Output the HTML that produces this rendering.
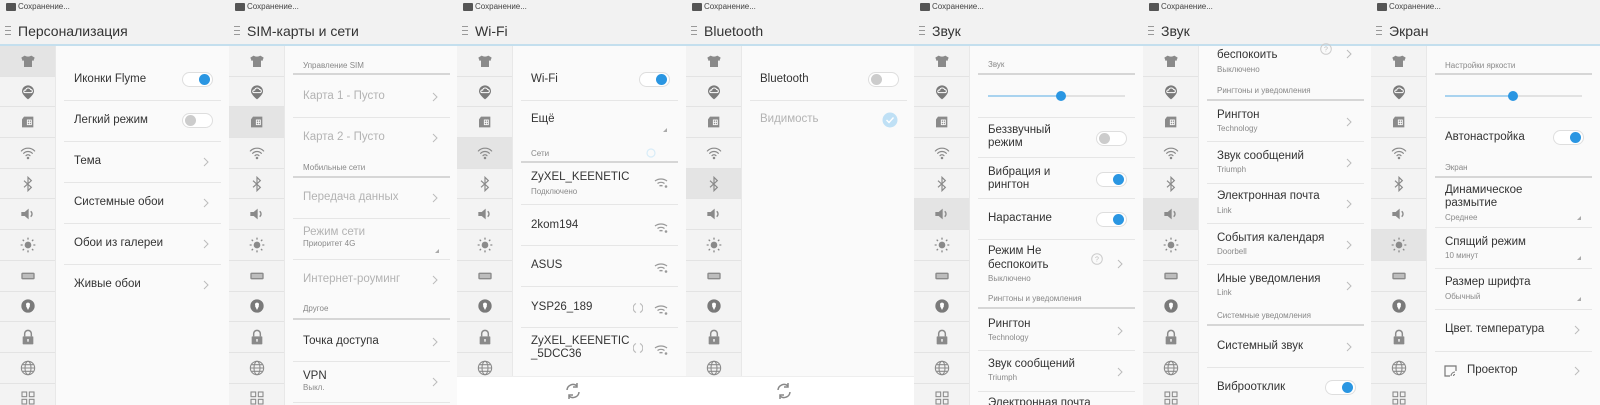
<!DOCTYPE html>
<html><head><meta charset="utf-8">
<style>
*{margin:0;padding:0;box-sizing:border-box}
body{width:1600px;height:405px;overflow:hidden;background:#fafafa;font-family:"Liberation Sans","Noto Sans CJK SC",sans-serif;position:relative}
.p{position:absolute;top:0;width:229px;height:405px;overflow:hidden;background:#fafafa}
.st{position:absolute;left:0;top:0;width:100%;height:16px;background:#f2f2f2}
.st .tx{position:absolute;left:18px;top:2px;font-size:8px;color:#444;line-height:10px}
.st .im{position:absolute;left:6px;top:3px;width:10px;height:8px;background:#555;border-radius:1px}
.tb{position:absolute;left:0;top:16px;width:100%;height:29px;background:#f2f2f2}
.tb .hm{position:absolute;left:5px;top:10px;width:6px;height:9px;border-top:1px solid #999;border-bottom:1px solid #999}
.tb .hm:after{content:"";position:absolute;left:0;top:3px;width:6px;height:1px;background:#999}
.tb .tt{position:absolute;left:18px;top:7px;font-size:14px;color:#333;line-height:16px;white-space:nowrap}
.bl{position:absolute;left:0;top:44px;width:100%;height:2px;background:#c4dfee}
.sd{position:absolute;left:0;top:46px;width:56px;height:360px;background:#f3f3f3;border-right:1px solid #e8e8e8}
.r{height:30.7px;border-bottom:1px solid #e3e3e3;display:flex;align-items:center;justify-content:center}
.r.sel{background:#e4e4e4}
.r svg{width:16px;height:16px}
.t{position:absolute;left:74px;font-size:11.5px;color:#333;white-space:nowrap;line-height:13px}
.g{color:#b3b3b3}
.s{position:absolute;left:74px;font-size:8px;color:#8a8a8a;white-space:nowrap;line-height:10px}
.h{position:absolute;left:74px;font-size:8px;color:#888;white-space:nowrap;line-height:10px}
.ln{position:absolute;left:64px;width:157px;height:1px;background:#e6e6e6}
.hl{position:absolute;left:64px;width:157px;height:2px;background:#d6d6d6}
.tg{position:absolute;left:182px;width:31px;height:15px;border:1px solid #dedede;border-radius:8px;background:#fff}
.tg:after{content:"";position:absolute;top:1px;width:11px;height:11px;border-radius:50%;background:#ccc;left:2px}
.tg.on:after{background:#2a96e2;left:16px}
.ch{position:absolute;left:203px;width:6px;height:10px}
.tri{position:absolute;left:206px;width:0;height:0;border-left:4px solid transparent;border-bottom:4px solid #aaa}
.sl{position:absolute;left:74px;width:137px;height:2px;background:#e2e2e2}
.sl i{position:absolute;left:0;top:0;height:2px;background:#a9d3ef}
.sl b{position:absolute;top:-4px;width:10px;height:10px;border-radius:50%;background:#2a96e2}
.bb{position:absolute;left:0;top:376px;width:100%;height:29px;background:#fff;border-top:1px solid #eee}
.ic{position:absolute}
</style></head><body>
<svg width="0" height="0" style="position:absolute">
<defs>
<g id="i0"><path d="M7 4 L2 7 L4 12 L6 11 V21 H18 V11 L20 12 L22 7 L17 4 Q12 7 7 4Z" fill="#8a8a8a"/></g>
<g id="i1"><path d="M12 2a9 9 0 0 1 9 9c0 5-9 12-9 12s-9-7-9-12a9 9 0 0 1 9-9z" fill="#7a7a7a"/><path d="M7 13h10a2.5 2.5 0 0 0-1-4.8 4 4 0 0 0-7.5 1A2 2 0 0 0 7 13z" fill="none" stroke="#fff" stroke-width="1.5"/></g>
<g id="i2"><path d="M6 4h14v16H3V8z" fill="#8a8a8a"/><rect x="11" y="9" width="6" height="7" fill="none" stroke="#fff" stroke-width="1.3"/><path d="M14 9v7M11 12.5h6" stroke="#fff" stroke-width="1.2"/></g>
<g id="i3" fill="none" stroke="#8a8a8a" stroke-width="1.8" stroke-linecap="round"><path d="M2 9a14 14 0 0 1 20 0"/><path d="M5.5 12.5a9 9 0 0 1 13 0"/><path d="M9 16a4 4 0 0 1 6 0"/><circle cx="12" cy="19.5" r="1" fill="#8a8a8a"/></g>
<g id="i4"><path d="M6 7l11 10-5 5V2l5 5L6 17" fill="none" stroke="#8a8a8a" stroke-width="1.8"/></g>
<g id="i5"><path d="M2 9h5l6-5v16l-6-5H2z" fill="#8a8a8a"/><path d="M16 8a5 5 0 0 1 0 8" fill="none" stroke="#8a8a8a" stroke-width="2"/></g>
<g id="i6"><circle cx="12" cy="12" r="5" fill="#8a8a8a"/><g stroke="#8a8a8a" stroke-width="2"><path d="M12 1v3M12 20v3M1 12h3M20 12h3M4 4l2 2M18 18l2 2M4 20l2-2M18 6l2-2"/></g></g>
<g id="i7"><rect x="2" y="7" width="20" height="10" rx="2" fill="#8a8a8a"/><rect x="4" y="9" width="16" height="6" fill="#bdbdbd"/></g>
<g id="i8"><circle cx="12" cy="12" r="10" fill="#7a7a7a"/><circle cx="12" cy="10" r="3" fill="#fff"/><path d="M9 12l3 6 3-6z" fill="#fff"/></g>
<g id="i9"><path d="M7 11V7a5 5 0 0 1 10 0v4" fill="none" stroke="#8a8a8a" stroke-width="2.2"/><rect x="4" y="11" width="16" height="12" rx="1" fill="#8a8a8a"/><rect x="11" y="15" width="2" height="4" fill="#fff"/></g>
<g id="i10" fill="none" stroke="#8a8a8a" stroke-width="1.6"><circle cx="12" cy="12" r="10"/><ellipse cx="12" cy="12" rx="4.5" ry="10"/><path d="M2 12h20M4 7h16M4 17h16"/></g>
<g id="i11" fill="none" stroke="#8a8a8a" stroke-width="1.6"><rect x="3" y="3" width="7" height="7"/><rect x="14" y="3" width="7" height="7"/><rect x="3" y="14" width="7" height="7"/><rect x="14" y="14" width="7" height="7"/></g>
<g id="chev"><path d="M1 1l4 4-4 4" fill="none" stroke="#bbb" stroke-width="1"/></g>
<g id="wf"><path d="M1 6a10 10 0 0 1 12 0M3.5 8.5a6 6 0 0 1 7 0M5.5 11a3 3 0 0 1 3 0" fill="none" stroke="#999" stroke-width="1.3"/><circle cx="12" cy="11.5" r="1.3" fill="#999"/></g>
<g id="sy"><path d="M3 1.5a5 5 0 0 0 0 9M7 1.5a5 5 0 0 1 0 9" fill="none" stroke="#bbb" stroke-width="1.2"/></g>
<g id="rf"><path d="M3 8a6 6 0 0 1 10-4M15 10a6 6 0 0 1-10 4" fill="none" stroke="#888" stroke-width="1.5"/><path d="M13 1v4h-4M5 17v-4h4" fill="none" stroke="#888" stroke-width="1.5"/></g>
</defs></svg>

<!-- Panel 1 -->
<div class="p" style="left:0">
<div class="st"><div class="im"></div><div class="tx">Сохранение...</div></div>
<div class="tb"><div class="hm"></div><div class="tt">Персонализация</div></div><div class="bl"></div>
<div class="sd" data-s="0"></div>
<div class="t" style="top:73px">Иконки Flyme</div><div class="tg on" style="top:72px"></div><div class="ln" style="top:100px"></div>
<div class="t" style="top:114px">Легкий режим</div><div class="tg" style="top:113px"></div><div class="ln" style="top:141px"></div>
<div class="t" style="top:155px">Тема</div><svg class="ch" style="top:157px"><use href="#chev"/></svg><div class="ln" style="top:182px"></div>
<div class="t" style="top:196px">Системные обои</div><svg class="ch" style="top:198px"><use href="#chev"/></svg><div class="ln" style="top:223px"></div>
<div class="t" style="top:237px">Обои из галереи</div><svg class="ch" style="top:239px"><use href="#chev"/></svg><div class="ln" style="top:264px"></div>
<div class="t" style="top:278px">Живые обои</div><svg class="ch" style="top:280px"><use href="#chev"/></svg>
</div>

<!-- Panel 2 -->
<div class="p" style="left:229px">
<div class="st"><div class="im"></div><div class="tx">Сохранение...</div></div>
<div class="tb"><div class="hm"></div><div class="tt">SIM-карты и сети</div></div><div class="bl"></div>
<div class="sd" data-s="2"></div>
<div class="h" style="top:61px">Управление SIM</div><div class="hl" style="top:73px"></div>
<div class="t g" style="top:90px">Карта 1 - Пусто</div><svg class="ch" style="top:92px"><use href="#chev"/></svg><div class="ln" style="top:117px"></div>
<div class="t g" style="top:131px">Карта 2 - Пусто</div><svg class="ch" style="top:133px"><use href="#chev"/></svg>
<div class="h" style="top:163px">Мобильные сети</div><div class="hl" style="top:176px"></div>
<div class="t g" style="top:191px">Передача данных</div><svg class="ch" style="top:193px"><use href="#chev"/></svg><div class="ln" style="top:218px"></div>
<div class="t g" style="top:226px">Режим сети</div><div class="s" style="top:239px">Приоритет 4G</div><div class="tri" style="top:249px"></div><div class="ln" style="top:259px"></div>
<div class="t g" style="top:273px">Интернет-роуминг</div><svg class="ch" style="top:275px"><use href="#chev"/></svg>
<div class="h" style="top:304px">Другое</div><div class="hl" style="top:318px"></div>
<div class="t" style="top:335px">Точка доступа</div><svg class="ch" style="top:337px"><use href="#chev"/></svg><div class="ln" style="top:361px"></div>
<div class="t" style="top:370px">VPN</div><div class="s" style="top:383px">Выкл.</div><svg class="ch" style="top:377px"><use href="#chev"/></svg><div class="ln" style="top:402px"></div>
</div>

<!-- Panel 3 -->
<div class="p" style="left:457px">
<div class="st"><div class="im"></div><div class="tx">Сохранение...</div></div>
<div class="tb"><div class="hm"></div><div class="tt">Wi-Fi</div></div><div class="bl"></div>
<div class="sd" data-s="3"></div>
<div class="t" style="top:73px">Wi-Fi</div><div class="tg on" style="top:72px"></div><div class="ln" style="top:100px"></div>
<div class="t" style="top:113px">Ещё</div><div class="tri" style="top:128px"></div>
<div class="h" style="top:149px">Сети</div><svg class="ic" style="left:189px;top:148px;width:10px;height:10px"><circle cx="5" cy="5" r="4" fill="none" stroke="#d8ecf8" stroke-width="1.2"/></svg><div class="hl" style="top:161px"></div>
<div class="t" style="top:171px">ZyXEL_KEENETIC</div><div class="s" style="top:187px">Подключено</div><svg class="ic" style="left:197px;top:175px;width:14px;height:13px"><use href="#wf"/></svg><div class="ln" style="top:204px"></div>
<div class="t" style="top:219px">2kom194</div><svg class="ic" style="left:197px;top:220px;width:14px;height:13px"><use href="#wf"/></svg><div class="ln" style="top:245px"></div>
<div class="t" style="top:259px">ASUS</div><svg class="ic" style="left:197px;top:260px;width:14px;height:13px"><use href="#wf"/></svg><div class="ln" style="top:286px"></div>
<div class="t" style="top:301px">YSP26_189</div><svg class="ic" style="left:176px;top:302px;width:10px;height:12px"><use href="#sy"/></svg><svg class="ic" style="left:197px;top:302px;width:14px;height:13px"><use href="#wf"/></svg><div class="ln" style="top:327px"></div>
<div class="t" style="top:335px">ZyXEL_KEENETIC</div><div class="t" style="top:348px">_5DCC36</div><svg class="ic" style="left:176px;top:342px;width:10px;height:12px"><use href="#sy"/></svg><svg class="ic" style="left:197px;top:342px;width:14px;height:13px"><use href="#wf"/></svg>
<div class="bb"><svg class="ic" style="left:107px;top:5px;width:18px;height:18px"><use href="#rf"/></svg></div>
</div>

<!-- Panel 4 -->
<div class="p" style="left:686px">
<div class="st"><div class="im"></div><div class="tx">Сохранение...</div></div>
<div class="tb"><div class="hm"></div><div class="tt">Bluetooth</div></div><div class="bl"></div>
<div class="sd" data-s="4"></div>
<div class="t" style="top:73px">Bluetooth</div><div class="tg" style="top:72px"></div><div class="ln" style="top:100px"></div>
<div class="t g" style="top:113px">Видимость</div><svg class="ic" style="left:196px;top:112px;width:16px;height:16px"><circle cx="8" cy="8" r="7.5" fill="#bfe0f5"/><path d="M4.5 8l2.5 2.5 4.5-5" fill="none" stroke="#fff" stroke-width="1.4"/></svg>
<div class="bb"><svg class="ic" style="left:89px;top:5px;width:18px;height:18px"><use href="#rf"/></svg></div>
</div>

<!-- Panel 5 -->
<div class="p" style="left:914px">
<div class="st"><div class="im"></div><div class="tx">Сохранение...</div></div>
<div class="tb"><div class="hm"></div><div class="tt">Звук</div></div><div class="bl"></div>
<div class="sd" data-s="5"></div>
<div class="h" style="top:60px">Звук</div><div class="hl" style="top:73px"></div>
<div class="sl" style="top:95px"><i style="width:73px"></i><b style="left:68px"></b></div><div class="ln" style="top:117px"></div>
<div class="t" style="top:124px">Беззвучный</div><div class="t" style="top:137px">режим</div><div class="tg" style="top:131px"></div><div class="ln" style="top:157px"></div>
<div class="t" style="top:166px">Вибрация и</div><div class="t" style="top:179px">рингтон</div><div class="tg on" style="top:172px"></div><div class="ln" style="top:198px"></div>
<div class="t" style="top:212px">Нарастание</div><div class="tg on" style="top:212px"></div><div class="ln" style="top:239px"></div>
<div class="t" style="top:245px">Режим Не</div><div class="t" style="top:259px">беспокоить</div><div class="s" style="top:274px">Выключено</div>
<svg class="ic" style="left:177px;top:253px;width:12px;height:12px"><circle cx="6" cy="6" r="5.3" fill="none" stroke="#ccc"/><text x="6" y="8.5" font-size="7" text-anchor="middle" fill="#bbb" font-family="Liberation Sans">?</text></svg>
<svg class="ch" style="top:259px"><use href="#chev"/></svg>
<div class="h" style="top:294px">Рингтоны и уведомления</div><div class="hl" style="top:307px"></div>
<div class="t" style="top:318px">Рингтон</div><div class="s" style="top:333px">Technology</div><svg class="ch" style="top:326px"><use href="#chev"/></svg><div class="ln" style="top:350px"></div>
<div class="t" style="top:358px">Звук сообщений</div><div class="s" style="top:373px">Triumph</div><svg class="ch" style="top:367px"><use href="#chev"/></svg><div class="ln" style="top:391px"></div>
<div class="t" style="top:397px">Электронная почта</div>
</div>

<!-- Panel 6 -->
<div class="p" style="left:1143px">
<div class="t" style="top:36px">Режим Не</div>
<div class="st"><div class="im"></div><div class="tx">Сохранение...</div></div>
<div class="tb"><div class="hm"></div><div class="tt">Звук</div></div><div class="bl"></div>
<div class="sd" data-s="5"></div>
<div class="t" style="top:49px">беспокоить</div><div class="s" style="top:65px">Выключено</div>
<svg class="ic" style="left:177px;top:43px;width:12px;height:12px"><circle cx="6" cy="6" r="5.3" fill="none" stroke="#ccc"/><text x="6" y="8.5" font-size="7" text-anchor="middle" fill="#bbb" font-family="Liberation Sans">?</text></svg>
<svg class="ch" style="top:49px"><use href="#chev"/></svg>
<div class="h" style="top:86px">Рингтоны и уведомления</div><div class="hl" style="top:99px"></div>
<div class="t" style="top:109px">Рингтон</div><div class="s" style="top:124px">Technology</div><svg class="ch" style="top:117px"><use href="#chev"/></svg><div class="ln" style="top:141px"></div>
<div class="t" style="top:150px">Звук сообщений</div><div class="s" style="top:165px">Triumph</div><svg class="ch" style="top:158px"><use href="#chev"/></svg><div class="ln" style="top:183px"></div>
<div class="t" style="top:190px">Электронная почта</div><div class="s" style="top:206px">Link</div><svg class="ch" style="top:199px"><use href="#chev"/></svg><div class="ln" style="top:223px"></div>
<div class="t" style="top:232px">События календаря</div><div class="s" style="top:247px">Doorbell</div><svg class="ch" style="top:240px"><use href="#chev"/></svg><div class="ln" style="top:264px"></div>
<div class="t" style="top:273px">Иные уведомления</div><div class="s" style="top:288px">Link</div><svg class="ch" style="top:281px"><use href="#chev"/></svg>
<div class="h" style="top:311px">Системные уведомления</div><div class="hl" style="top:324px"></div>
<div class="t" style="top:340px">Системный звук</div><svg class="ch" style="top:342px"><use href="#chev"/></svg><div class="ln" style="top:367px"></div>
<div class="t" style="top:381px">Виброотклик</div><div class="tg on" style="top:380px"></div>
</div>

<!-- Panel 7 -->
<div class="p" style="left:1371px">
<div class="st"><div class="im"></div><div class="tx">Сохранение...</div></div>
<div class="tb"><div class="hm"></div><div class="tt">Экран</div></div><div class="bl"></div>
<div class="sd" data-s="6"></div>
<div class="h" style="top:61px">Настройки яркости</div><div class="hl" style="top:73px"></div>
<div class="sl" style="top:95px"><i style="width:68px"></i><b style="left:63px"></b></div><div class="ln" style="top:117px"></div>
<div class="t" style="top:131px">Автонастройка</div><div class="tg on" style="top:130px"></div>
<div class="h" style="top:163px">Экран</div><div class="hl" style="top:176px"></div>
<div class="t" style="top:184px">Динамическое</div><div class="t" style="top:197px">размытие</div><div class="s" style="top:213px">Среднее</div><div class="tri" style="top:216px"></div><div class="ln" style="top:227px"></div>
<div class="t" style="top:236px">Спящий режим</div><div class="s" style="top:251px">10 минут</div><div class="tri" style="top:256px"></div><div class="ln" style="top:268px"></div>
<div class="t" style="top:276px">Размер шрифта</div><div class="s" style="top:292px">Обычный</div><div class="tri" style="top:297px"></div><div class="ln" style="top:309px"></div>
<div class="t" style="top:323px">Цвет. температура</div><svg class="ch" style="top:325px"><use href="#chev"/></svg><div class="ln" style="top:351px"></div>
<svg class="ic" style="left:73px;top:365px;width:13px;height:12px"><path d="M6 1H1v10h5M1 1h11v5" fill="none" stroke="#777" stroke-width="1.2"/><path d="M7 11a4 4 0 0 1 4-4M9.5 11a1.5 1.5 0 0 1 1.5-1.5" fill="none" stroke="#777" stroke-width="1"/></svg>
<div class="t" style="left:96px;top:364px">Проектор</div><svg class="ch" style="top:366px"><use href="#chev"/></svg>
</div>

<script>
document.querySelectorAll('.sd').forEach(function(sd){
  var s=+sd.getAttribute('data-s'),h='';
  for(var i=0;i<12;i++){h+='<div class="r'+(i==s?' sel':'')+'"><svg viewBox="0 0 24 24"><use href="#i'+i+'"/></svg></div>';}
  sd.innerHTML=h;
});
</script>
</body></html>
